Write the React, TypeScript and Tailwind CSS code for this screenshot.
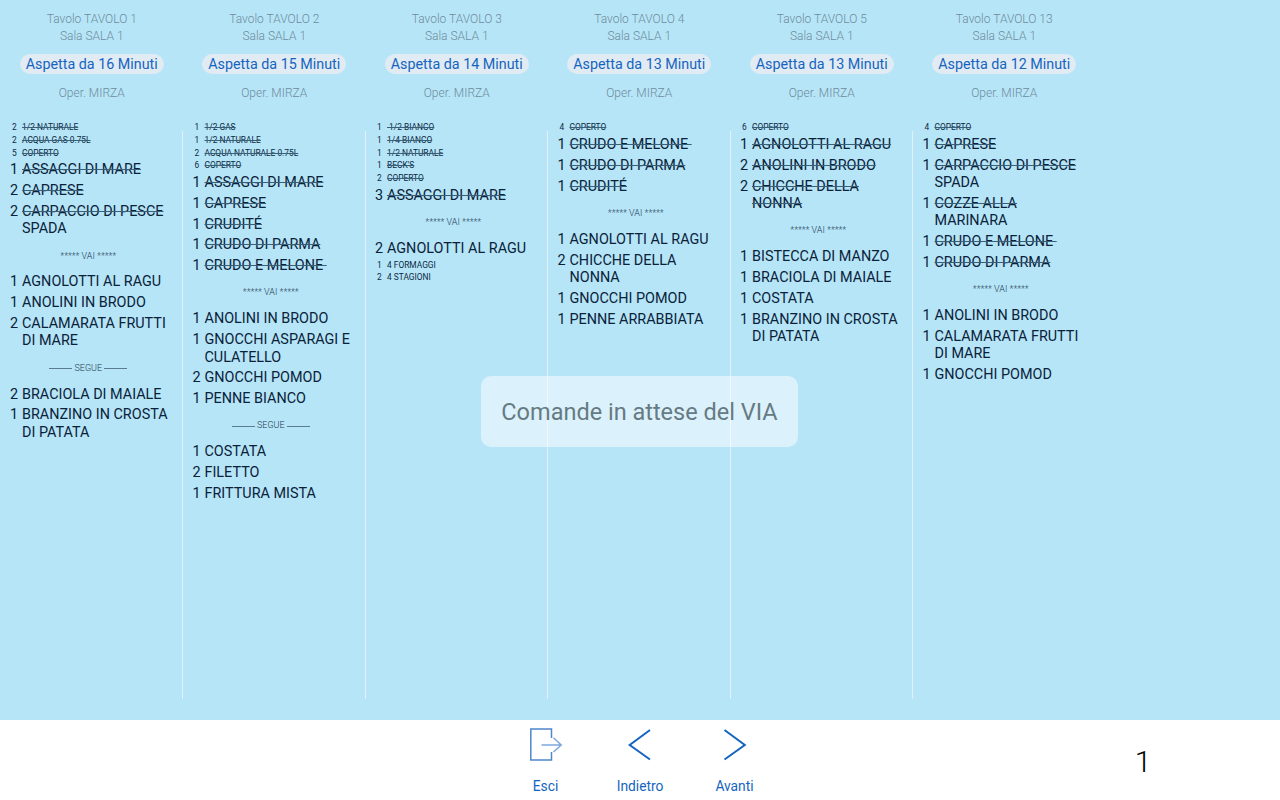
const F = "font-['Roboto',sans-serif]";

type Item =
  | { k: "s"; q: string; t: string; x?: boolean }
  | { k: "l"; q: string; lines: [string, boolean][] }
  | { k: "vai" }
  | { k: "segue" };

const s = (q: string, t: string, x = true): Item => ({ k: "s", q, t, x });
const l = (q: string, t: string, x = true): Item => ({ k: "l", q, lines: [[t, x]] });
const l2 = (q: string, a: string, ax: boolean, b: string, bx: boolean): Item => ({
  k: "l",
  q,
  lines: [
    [a, ax],
    [b, bx],
  ],
});
const vai: Item = { k: "vai" };
const segue: Item = { k: "segue" };

const columns: { tavolo: string; min: number; items: Item[] }[] = [
  {
    tavolo: "1",
    min: 16,
    items: [
      s("2", "1/2 NATURALE"),
      s("2", "ACQUA GAS 0.75L"),
      s("5", "COPERTO"),
      l("1", "ASSAGGI DI MARE"),
      l("2", "CAPRESE"),
      l2("2", "CARPACCIO DI PESCE", true, "SPADA", false),
      vai,
      l("1", "AGNOLOTTI AL RAGU", false),
      l("1", "ANOLINI IN BRODO", false),
      l2("2", "CALAMARATA FRUTTI", false, "DI MARE", false),
      segue,
      l("2", "BRACIOLA DI MAIALE", false),
      l2("1", "BRANZINO IN CROSTA", false, "DI PATATA", false),
    ],
  },
  {
    tavolo: "2",
    min: 15,
    items: [
      s("1", "1/2 GAS"),
      s("1", "1/2 NATURALE"),
      s("2", "ACQUA NATURALE 0.75L"),
      s("6", "COPERTO"),
      l("1", "ASSAGGI DI MARE"),
      l("1", "CAPRESE"),
      l("1", "CRUDITÉ"),
      l("1", "CRUDO DI PARMA"),
      l("1", "CRUDO E MELONE "),
      vai,
      l("1", "ANOLINI IN BRODO", false),
      l2("1", "GNOCCHI ASPARAGI E", false, "CULATELLO", false),
      l("2", "GNOCCHI POMOD", false),
      l("1", "PENNE BIANCO", false),
      segue,
      l("1", "COSTATA", false),
      l("2", "FILETTO", false),
      l("1", "FRITTURA MISTA", false),
    ],
  },
  {
    tavolo: "3",
    min: 14,
    items: [
      s("1", " 1/2 BIANCO"),
      s("1", "1/4 BIANCO"),
      s("1", "1/2 NATURALE"),
      s("1", "BECK'S"),
      s("2", "COPERTO"),
      l("3", "ASSAGGI DI MARE"),
      vai,
      l("2", "AGNOLOTTI AL RAGU", false),
      s("1", "4 FORMAGGI", false),
      s("2", "4 STAGIONI", false),
    ],
  },
  {
    tavolo: "4",
    min: 13,
    items: [
      s("4", "COPERTO"),
      l("1", "CRUDO E MELONE "),
      l("1", "CRUDO DI PARMA"),
      l("1", "CRUDITÉ"),
      vai,
      l("1", "AGNOLOTTI AL RAGU", false),
      l2("2", "CHICCHE DELLA", false, "NONNA", false),
      l("1", "GNOCCHI POMOD", false),
      l("1", "PENNE ARRABBIATA", false),
    ],
  },
  {
    tavolo: "5",
    min: 13,
    items: [
      s("6", "COPERTO"),
      l("1", "AGNOLOTTI AL RAGU"),
      l("2", "ANOLINI IN BRODO"),
      l2("2", "CHICCHE DELLA", true, "NONNA", true),
      vai,
      l("1", "BISTECCA DI MANZO", false),
      l("1", "BRACIOLA DI MAIALE", false),
      l("1", "COSTATA", false),
      l2("1", "BRANZINO IN CROSTA", false, "DI PATATA", false),
    ],
  },
  {
    tavolo: "13",
    min: 12,
    items: [
      s("4", "COPERTO"),
      l("1", "CAPRESE"),
      l2("1", "CARPACCIO DI PESCE", true, "SPADA", false),
      l2("1", "COZZE ALLA", true, "MARINARA", false),
      l("1", "CRUDO E MELONE "),
      l("1", "CRUDO DI PARMA"),
      vai,
      l("1", "ANOLINI IN BRODO", false),
      l2("1", "CALAMARATA FRUTTI", false, "DI MARE", false),
      l("1", "GNOCCHI POMOD", false),
    ],
  },
];

function Row({ item }: { item: Item }) {
  if (item.k === "s") {
    return (
      <div className="flex h-[12.67px] items-center pl-[12px] text-[8.4px] leading-[11px] text-[#0d2a3f]">
        <span className="w-[10px] shrink-0">{item.q}</span>
        <span className={`whitespace-pre ${item.x ? "line-through decoration-[#3a5f78]" : ""}`}>{item.t}</span>
      </div>
    );
  }
  if (item.k === "l") {
    return (
      <div className="flex py-[1.75px] pl-[10px] text-[14.4px] leading-[17.3px] text-[#0a2238]">
        <span className="w-[12px] shrink-0">{item.q}</span>
        <div>
          {item.lines.map(([t, x]) => (
            <div key={t} className={`whitespace-pre ${x ? "line-through decoration-[#3a5f78]" : ""}`}>
              {t}
            </div>
          ))}
        </div>
      </div>
    );
  }
  if (item.k === "vai") {
    return (
      <div className="flex h-[32.4px] items-center justify-center pr-[6px] pt-[1.5px] text-[9px] font-light text-[#1d3a50]">
        ***** VAI *****
      </div>
    );
  }
  return (
    <div className="flex h-[32.4px] items-center justify-center gap-[2px] pr-[6px] pt-[1.5px] text-[9px] font-light text-[#1d3a50]">
      <span className="h-px w-[23px] bg-[#5b7d92]" />
      SEGUE
      <span className="h-px w-[23px] bg-[#5b7d92]" />
    </div>
  );
}

function Column({ c, first }: { c: (typeof columns)[number]; first: boolean }) {
  return (
    <div className="relative w-[182.5px] shrink-0">
      {!first && <div className="absolute left-[-0.1px] top-[131px] h-[568px] w-px bg-[#e3f0f6]" />}
      <div className="flex h-[121.67px] flex-col items-center pl-[1px] pt-[11px] text-[12px] font-light text-[#6f8c9b]">
        <div className="leading-[17px]">Tavolo TAVOLO {c.tavolo}</div>
        <div className="leading-[17px]">Sala SALA 1</div>
        <div className="mt-[8.5px] flex h-[20px] items-center rounded-[10px] bg-[#e0ebf3] px-[6px] pt-[2px] text-[14.3px] font-normal text-[#1565c0]">
          Aspetta da {c.min} Minuti
        </div>
        <div className="mt-[11.5px] leading-[17px]">Oper. MIRZA</div>
      </div>
      {c.items.map((item, i) => (
        <Row key={i} item={item} />
      ))}
    </div>
  );
}

function NavButton({ label, children }: { label: string; children: React.ReactNode }) {
  return (
    <div className="flex w-[94.5px] flex-col items-center pt-[8px]">
      <svg width="40" height="34" viewBox="0 0 40 34" fill="none">
        {children}
      </svg>
      <div className="mt-[17px] text-[13.8px] leading-[15px] text-[#1565c0]">{label}</div>
    </div>
  );
}

export default function App() {
  return (
    <div className={`relative flex h-[800px] w-[1280px] flex-col overflow-hidden bg-white ${F}`}>
      <div className="flex h-[720px] bg-[#b6e5f8]">
        {columns.map((c, i) => (
          <Column key={c.tavolo} c={c} first={i === 0} />
        ))}
      </div>
      <div className="grid h-[80px] grid-cols-[1fr_auto_1fr]">
        <div />
        <div className="flex">
          <NavButton label="Esci">
            <path d="M25.5 10V1H4.8V32H25.5V24" stroke="#4f86cc" strokeWidth="1.5" />
            <path d="M15.5 17H35.2M27.5 9.7L35.2 17L27.5 24" stroke="#7fa8dc" strokeWidth="1.5" />
          </NavButton>
          <NavButton label="Indietro">
            <path d="M30 2L9.7 17L30 31.5" stroke="#1565c0" strokeWidth="2" />
          </NavButton>
          <NavButton label="Avanti">
            <path d="M9.5 2L29.8 17L9.5 31.5" stroke="#1565c0" strokeWidth="2" />
          </NavButton>
        </div>
        <div className="pl-[353px] pt-[22px] text-[30px] font-light leading-[40px] text-black">1</div>
      </div>
      <div className="absolute left-[481px] top-[376px] flex h-[71px] w-[317px] items-center justify-center rounded-[10px] bg-white/50 pt-[3px] text-[23.5px] text-[#667a82]">
        Comande in attese del VIA
      </div>
    </div>
  );
}
